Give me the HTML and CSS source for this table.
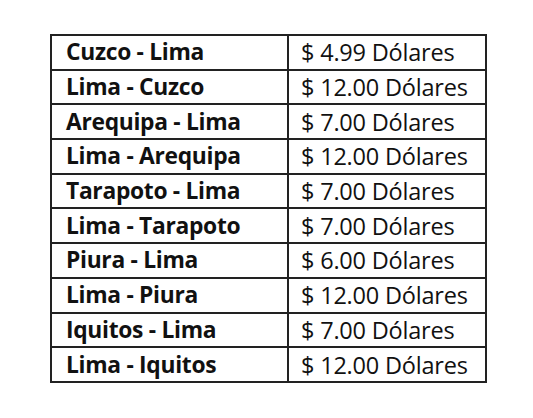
FILE: index.html
```html
<!DOCTYPE html>
<html lang="es">
<head>
<meta charset="utf-8">
<link rel="stylesheet" href="styles.css">
</head>
<body>
<table class="fares">
<tr><td class="route">Cuzco - Lima</td><td class="price">$ 4.99 Dólares</td></tr>
<tr><td class="route">Lima - Cuzco</td><td class="price">$ 12.00 Dólares</td></tr>
<tr><td class="route">Arequipa - Lima</td><td class="price">$ 7.00 Dólares</td></tr>
<tr><td class="route">Lima - Arequipa</td><td class="price">$ 12.00 Dólares</td></tr>
<tr><td class="route">Tarapoto - Lima</td><td class="price">$ 7.00 Dólares</td></tr>
<tr><td class="route">Lima - Tarapoto</td><td class="price">$ 7.00 Dólares</td></tr>
<tr><td class="route">Piura - Lima</td><td class="price">$ 6.00 Dólares</td></tr>
<tr><td class="route">Lima - Piura</td><td class="price">$ 12.00 Dólares</td></tr>
<tr><td class="route">Iquitos - Lima</td><td class="price">$ 7.00 Dólares</td></tr>
<tr><td class="route">Lima - Iquitos</td><td class="price">$ 12.00 Dólares</td></tr>
</table>
</body>
</html>
```
FILE: styles.css
```css
html, body {
  margin: 0;
  background: #ffffff;
}
body {
  padding: 34px 0 0 50px;
  font-family: "Open Sans", Lato, sans-serif;
  color: #111111;
}
.fares {
  border-collapse: collapse;
  width: 437px;
  table-layout: fixed;
}
.fares td {
  border: 2px solid #222222;
  height: 32.7px;
  padding: 0 0 0 14px;
  line-height: 32px;
  white-space: nowrap;
  overflow: hidden;
  vertical-align: middle;
}
.route {
  width: 221px;
  font-weight: bold;
  font-size: 22.8px;
  letter-spacing: -0.3px;
}
.fares td.price {
  padding-left: 12px;
  font-weight: normal;
  font-size: 23.5px;
  letter-spacing: -0.2px;
}
```
